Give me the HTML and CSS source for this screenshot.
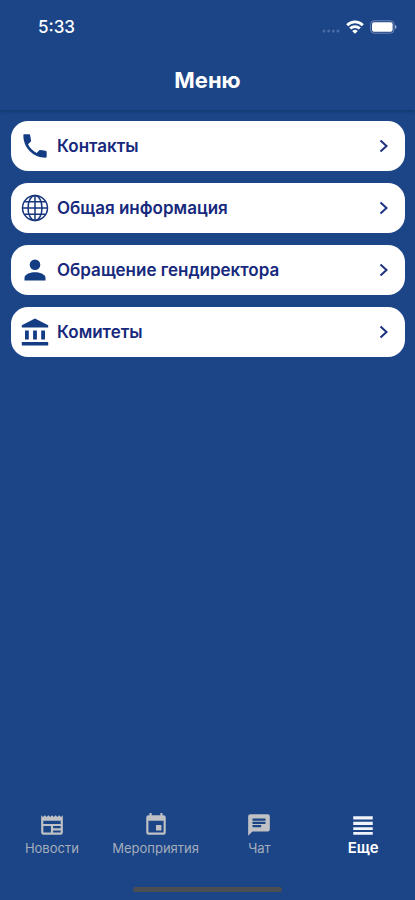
FILE: index.html
```html
<!DOCTYPE html>
<html lang="ru">
<head>
<meta charset="utf-8">
<meta name="viewport" content="width=device-width, initial-scale=1">
<title>Меню</title>
<link rel="stylesheet" href="styles.css">
</head>
<body>
<header class="header">
  <div class="status">
    <span class="time">5:33</span>
    <div class="indicators">
      <svg class="signal" width="18" height="4" viewBox="0 0 18 4" aria-hidden="true"><circle cx="2" cy="2" r="1.5"/><circle cx="6.7" cy="2" r="1.5"/><circle cx="11.3" cy="2" r="1.5"/><circle cx="16" cy="2" r="1.5"/></svg>
      <svg width="18" height="14" viewBox="0 0 18 14" aria-hidden="true"><g fill="none" stroke="#fff" stroke-width="2.8"><path d="M1.200 5.200a11 11 0 0 1 15.600 0"/><path d="M4.200 8.600a6.800 6.800 0 0 1 9.600 0"/></g><path fill="#fff" d="M9 13.800 6.200 11a4 4 0 0 1 5.600 0z"/></svg>
      <svg width="27" height="14" viewBox="0 0 27 14" aria-hidden="true"><rect x=".6" y=".8" width="23.4" height="12.4" rx="3.5" fill="none" stroke="#7085b5"/><rect x="2" y="2.2" width="20.6" height="9.6" rx="2" fill="#fff"/><path fill="#98a8cb" d="M25 5c2 .6 2 3.400 0 4z"/></svg>
    </div>
  </div>
  <h1 class="title">Меню</h1>
</header>
<main class="menu">
  <a class="card" href="#contacts">
    <svg class="icon" viewBox="0 0 24 24" aria-hidden="true"><path d="M3 2h3.800c.6 0 1 .4 1.100 1l.7 4.300c.1.400 0 .8-.3 1.100L6 10.600c1.600 3.200 4.200 5.800 7.400 7.400l2.300-2.300c.3-.3.700-.4 1.100-.3l4.200.7c.6.1 1 .6 1 1.100V21c0 .6-.4 1-1 1C10.500 22 2 13.500 2 3c0-.6.4-1 1-1z"/></svg>
    <span class="label">Контакты</span>
    <svg class="chevron" viewBox="0 0 12 16" aria-hidden="true"><path d="m3.500 2.500 6 5.500-6 5.500"/></svg>
  </a>
  <a class="card" href="#about">
    <svg class="icon globe" viewBox="0 0 28 28" aria-hidden="true"><circle cx="14" cy="14" r="12.5"/><ellipse cx="14" cy="14" rx="7" ry="12.5"/><path d="M14 1.500v25M1.500 14h25M3.500 7.800h21M3.500 20.200h21"/></svg>
    <span class="label">Общая информация</span>
    <svg class="chevron" viewBox="0 0 12 16" aria-hidden="true"><path d="m3.500 2.500 6 5.500-6 5.500"/></svg>
  </a>
  <a class="card" href="#appeal">
    <svg class="icon" viewBox="0 0 28 28" aria-hidden="true"><circle cx="14" cy="8.7" r="5.3"/><path d="M3.500 24.500v-2.700c0-3.700 6.500-5.500 10.500-5.500s10.500 1.800 10.500 5.500v2.700z"/></svg>
    <span class="label">Обращение гендиректора</span>
    <svg class="chevron" viewBox="0 0 12 16" aria-hidden="true"><path d="m3.500 2.500 6 5.500-6 5.500"/></svg>
  </a>
  <a class="card" href="#committees">
    <svg class="icon" viewBox="0 0 28 28" aria-hidden="true"><path d="m14 .5 13.200 6.700v2.300H.8V7.200zM4 12.500h3.800v9H4zM12.100 12.500h3.800v9h-3.800zM20.200 12.500H24v9h-3.800zM.8 24h26.400v3.600H.8z"/></svg>
    <span class="label">Комитеты</span>
    <svg class="chevron" viewBox="0 0 12 16" aria-hidden="true"><path d="m3.500 2.500 6 5.500-6 5.500"/></svg>
  </a>
</main>
<footer class="footer">
  <nav class="tabs">
    <a class="tab" href="#news">
      <svg class="tab-icon" viewBox="0 0 24 24" aria-hidden="true"><path fill-rule="evenodd" d="m22 3-1.670 1.670L18.670 3 17 4.670 15.330 3l-1.660 1.670L12 3l-1.670 1.670L8.670 3 7 4.670 5.330 3 3.670 4.670 2 3v16c0 1.100.900 2 2 2h16a2 2 0 0 0 2-2zM11 19H4v-6h7zM20 19h-7v-2h7zM20 15h-7v-2h7zM20 11H4V8h16z"/></svg>
      <span>Новости</span>
    </a>
    <a class="tab" href="#events">
      <svg class="tab-icon" viewBox="0 0 24 24" aria-hidden="true"><path d="M17 12h-5v5h5zM16 1v2H8V1H6v2H5a2 2 0 0 0-2 2v14c0 1.100.900 2 2 2h14a2 2 0 0 0 2-2V5a2 2 0 0 0-2-2h-1V1zM19 19H5V8h14z"/></svg>
      <span>Мероприятия</span>
    </a>
    <a class="tab" href="#chat">
      <svg class="tab-icon" viewBox="0 0 24 24" aria-hidden="true"><path d="M20 2H4a2 2 0 0 0-2 2v18l4-4h14a2 2 0 0 0 2-2V4a2 2 0 0 0-2-2zM6 6h12v2H6zM18 11H6V9h12zM14 14H6v-2h8z" fill-rule="evenodd"/></svg>
      <span>Чат</span>
    </a>
    <a class="tab active" href="#more" aria-current="page">
      <svg class="tab-icon" viewBox="0 0 24 24" aria-hidden="true"><path d="M3 4h18v3H3zM3 9h18v3H3zM3 14h18v2.500H3zM3 18.500h18V21H3z"/></svg>
      <span>Еще</span>
    </a>
  </nav>
  <div class="home-bar"></div>
</footer>
</body>
</html>
```
FILE: styles.css
```css
* {
  box-sizing: border-box;
}

body {
  display: flex;
  flex-direction: column;
  min-height: 100vh;
  margin: 0;
  background: #1b4587;
  color: #fff;
  font-family: Inter, "Liberation Sans", sans-serif;
}

a {
  color: inherit;
  text-decoration: none;
}

.header {
  padding-bottom: 16px;
  box-shadow: 0 1px 4px #0c3565;
}

.status {
  display: flex;
  align-items: center;
  justify-content: space-between;
  padding: 16px 18px 0 38px;
}

.time {
  font-size: 17px;
  font-weight: 500;
  line-height: 22px;
}

.indicators {
  display: flex;
  align-items: center;
  gap: 6px;
}

.signal {
  margin-top: 8px;
  fill: #4a6ba5;
}

.title {
  margin: 28px 0 0;
  font-size: 22px;
  font-weight: 700;
  line-height: 28px;
  text-align: center;
}

.menu {
  display: flex;
  flex: 1;
  flex-direction: column;
  gap: 12px;
  padding: 11px 10px 12px 11px;
}

.card {
  display: flex;
  align-items: center;
  gap: 8px;
  height: 50px;
  padding: 0 16px 0 10px;
  border-radius: 17px;
  background: #fff;
  color: #17297c;
}

.icon {
  flex: none;
  width: 28px;
  height: 28px;
  fill: #133c83;
}

.globe {
  fill: none;
  stroke: #17357d;
  stroke-width: 1.5;
}

.label {
  flex: 1;
  font-size: 17px;
  font-weight: 600;
  line-height: 24px;
}

.chevron {
  width: 12px;
  height: 16px;
  fill: none;
  stroke: #1c3180;
  stroke-width: 2;
}

.tabs {
  display: grid;
  grid-template-columns: repeat(4, 1fr);
}

.tab {
  display: flex;
  flex-direction: column;
  align-items: center;
  color: #a5adbc;
  font-size: 13px;
  line-height: 20px;
}

.tab-icon {
  width: 26px;
  height: 26px;
  fill: #bfc1c4;
}

.active {
  color: #fff;
  font-size: 15px;
  font-weight: 600;
}

.active .tab-icon {
  fill: #f0f3fa;
}

.home-bar {
  width: 36%;
  height: 5px;
  margin: 29px auto 8px;
  border-radius: 3px;
  background: #4c4e51;
}
```
